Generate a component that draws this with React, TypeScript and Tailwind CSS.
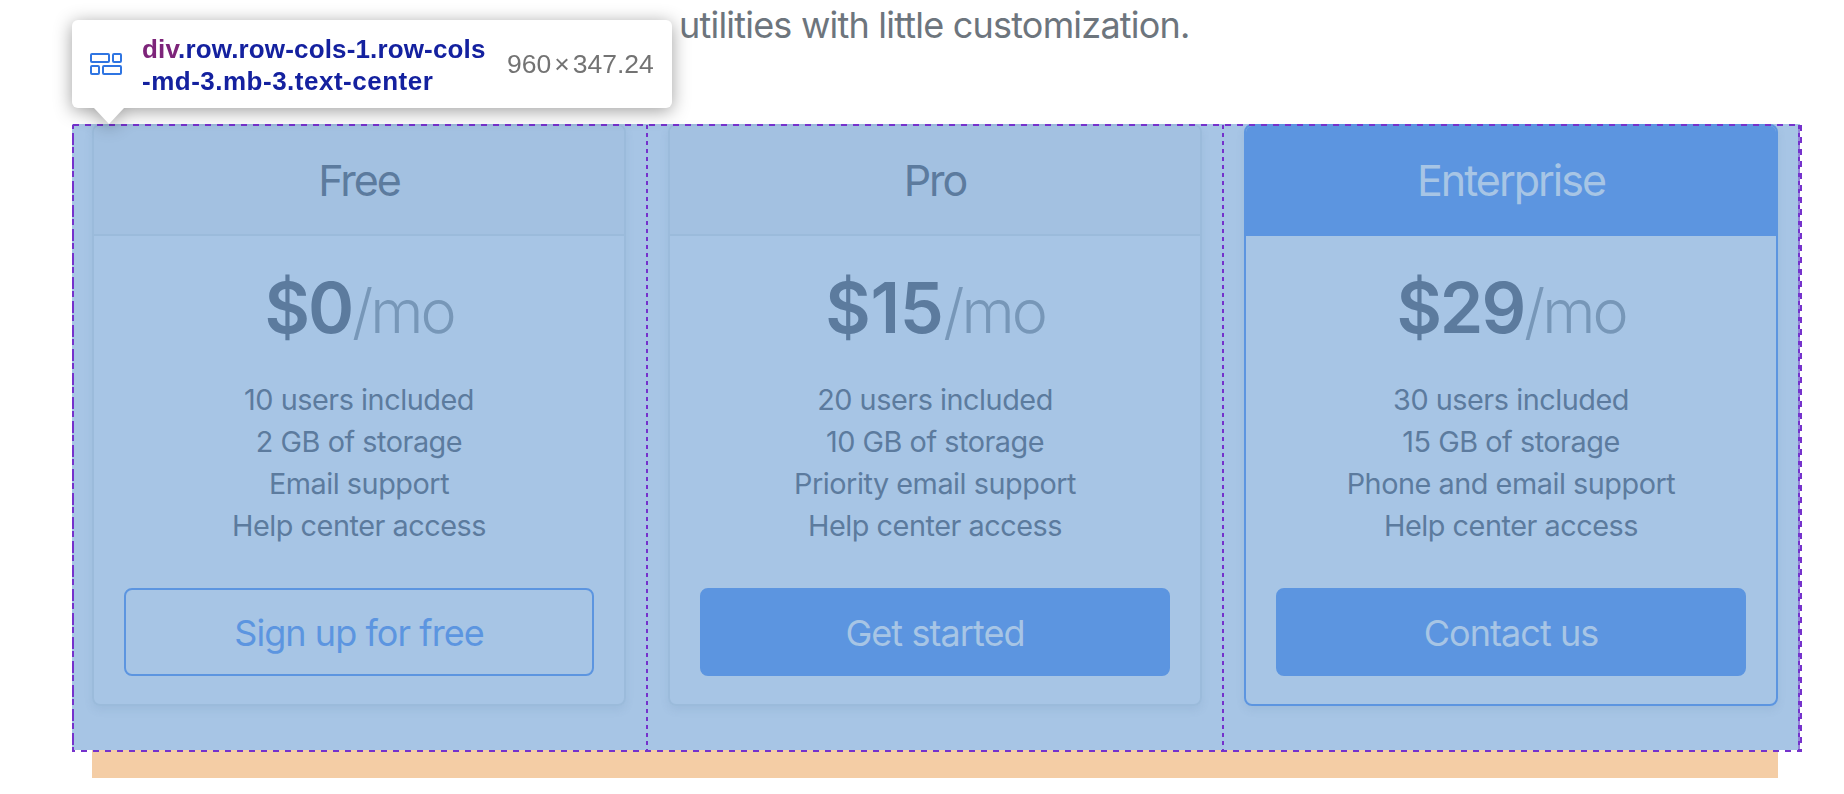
import { clsx } from 'clsx'

interface Plan {
  name: string
  price: string
  features: string[]
  cta: string
  outline?: boolean
  highlighted?: boolean
}

const plans: Plan[] = [
  {
    name: 'Free',
    price: '$0',
    features: ['10 users included', '2 GB of storage', 'Email support', 'Help center access'],
    cta: 'Sign up for free',
    outline: true,
  },
  {
    name: 'Pro',
    price: '$15',
    features: ['20 users included', '10 GB of storage', 'Priority email support', 'Help center access'],
    cta: 'Get started',
  },
  {
    name: 'Enterprise',
    price: '$29',
    features: ['30 users included', '15 GB of storage', 'Phone and email support', 'Help center access'],
    cta: 'Contact us',
    highlighted: true,
  },
]

function PlanCard({ plan }: { plan: Plan }) {
  return (
    <div
      className={clsx(
        'flex h-[582px] w-[534px] flex-col overflow-hidden rounded-lg border-2 text-center shadow-[0_4px_8px_rgba(70,110,150,0.1)]',
        plan.highlighted ? 'border-[#5c95e0]' : 'border-[#9bbbdb]'
      )}
    >
      <div
        className={clsx(
          'flex h-[110px] shrink-0 items-center justify-center border-b-2 text-[43px] leading-none',
          plan.highlighted
            ? 'border-[#5c95e0] bg-[#5c95e0] text-[#a7c5e5]'
            : 'border-[#9bbbdb] bg-[#a3c1e1] text-[#5c7b9e]'
        )}
      >
        <h4 className="pt-px tracking-[-0.047em]">{plan.name}</h4>
      </div>
      <div className="flex flex-1 flex-col px-[30px] pt-[29px]">
        <h1 className="h-[86px] text-[70px] leading-[85px] font-semibold text-[#5c7b9e]">
          <span className={clsx(plan.price === '$15' ? 'tracking-[-0.005em]' : 'tracking-[-0.03em]')}>
            {plan.price}
          </span>
          <small className="text-[61px] font-light tracking-[-0.05em] text-[#7797b8]">/mo</small>
        </h1>
        <ul className="mt-[28px] text-[28.8px] leading-[42px] tracking-[-0.016em] text-[#5c7b9e]">
          {plan.features.map((feature) => (
            <li key={feature}>{feature}</li>
          ))}
        </ul>
        <button
          className={clsx(
            'mt-[41px] h-[88px] w-full rounded-lg border-2 border-[#5c95e0] pt-0.5 text-[36px] tracking-[-0.026em]',
            plan.outline ? 'text-[#5c95e0]' : 'bg-[#5c95e0] text-[#a7c5e5]'
          )}
        >
          {plan.cta}
        </button>
      </div>
    </div>
  )
}

// Dashed guides around the flex container and its items
function FlexGuides() {
  return (
    <svg
      className="pointer-events-none absolute top-0 left-0"
      width="1732"
      height="630"
      fill="none"
      stroke="#7532cc"
      strokeWidth="2"
      shapeRendering="crispEdges"
    >
      <path d="M1 1H1728" strokeDasharray="6 6" />
      <path d="M0 627H1730" strokeDasharray="6 6" strokeDashoffset="3" />
      <path d="M1 1V628" strokeDasharray="6 4 12 2" strokeDashoffset="2" />
      <path d="M575 1V627M1151 1V627M1727 1V627" strokeDasharray="4 4" />
      <path d="M1727 1V627" stroke="#9586d8" strokeDasharray="4 4" strokeDashoffset="4" />
      <path d="M1729 1V628" strokeDasharray="6 6" />
    </svg>
  )
}

function FlexIcon() {
  return (
    <svg width="32" height="28" viewBox="0 0 32 28" fill="none" stroke="#2f75e2" strokeWidth="2">
      <rect x="1" y="1" width="18" height="8" rx="1" />
      <rect x="23" y="1" width="8" height="8" rx="1" />
      <rect x="1" y="13" width="8" height="8" rx="1" />
      <rect x="13" y="13" width="18" height="8" rx="1" />
    </svg>
  )
}

function InspectorTooltip() {
  return (
    <div className="absolute top-5 left-[72px] flex h-[88px] w-[600px] rounded-md bg-white font-['Liberation_Sans',Arial,sans-serif] drop-shadow-[0_3px_9px_rgba(0,0,0,0.38)]">
      <div className="flex w-full items-center pl-[18px]">
        <div className="w-[52px] pt-[6px]">
          <FlexIcon />
        </div>
        <div className="w-[365px] pt-0.5 text-[26px] leading-8 font-bold whitespace-nowrap text-[#14219f]">
          <div className="tracking-[0.15px]">
            <span className="text-[#7d2479]">div</span>.row.row-cols-1.row-cols
          </div>
          <div className="tracking-[0.5px]">-md-3.mb-3.text-center</div>
        </div>
        <div className="pt-0.5 text-[26.5px] whitespace-nowrap text-[#737373]">
          960<span className="mx-[3px]">×</span>347.24
        </div>
      </div>
      <svg className="absolute top-[88px] left-[22px]" width="30" height="16">
        <path d="M0 0H30L15 16Z" fill="white" />
      </svg>
    </div>
  )
}

export default function App() {
  return (
    <div className="relative h-[794px] w-[1844px] overflow-hidden bg-white font-[Inter,'Liberation_Sans',sans-serif]">
      <p className="h-[124px] pl-[679px] text-[36px] leading-[50px] tracking-[-0.022em] text-[#6d757d]">
        utilities with little customization.
      </p>

      <div className="relative ml-[72px] h-[626px] w-[1728px] bg-[#a7c5e5]">
        <div className="flex gap-[42px] pl-5">
          {plans.map((plan) => (
            <PlanCard key={plan.name} plan={plan} />
          ))}
        </div>
        <FlexGuides />
      </div>
      <div className="ml-[92px] h-7 w-[1686px] bg-[#f4cda5]" />

      <InspectorTooltip />
    </div>
  )
}
